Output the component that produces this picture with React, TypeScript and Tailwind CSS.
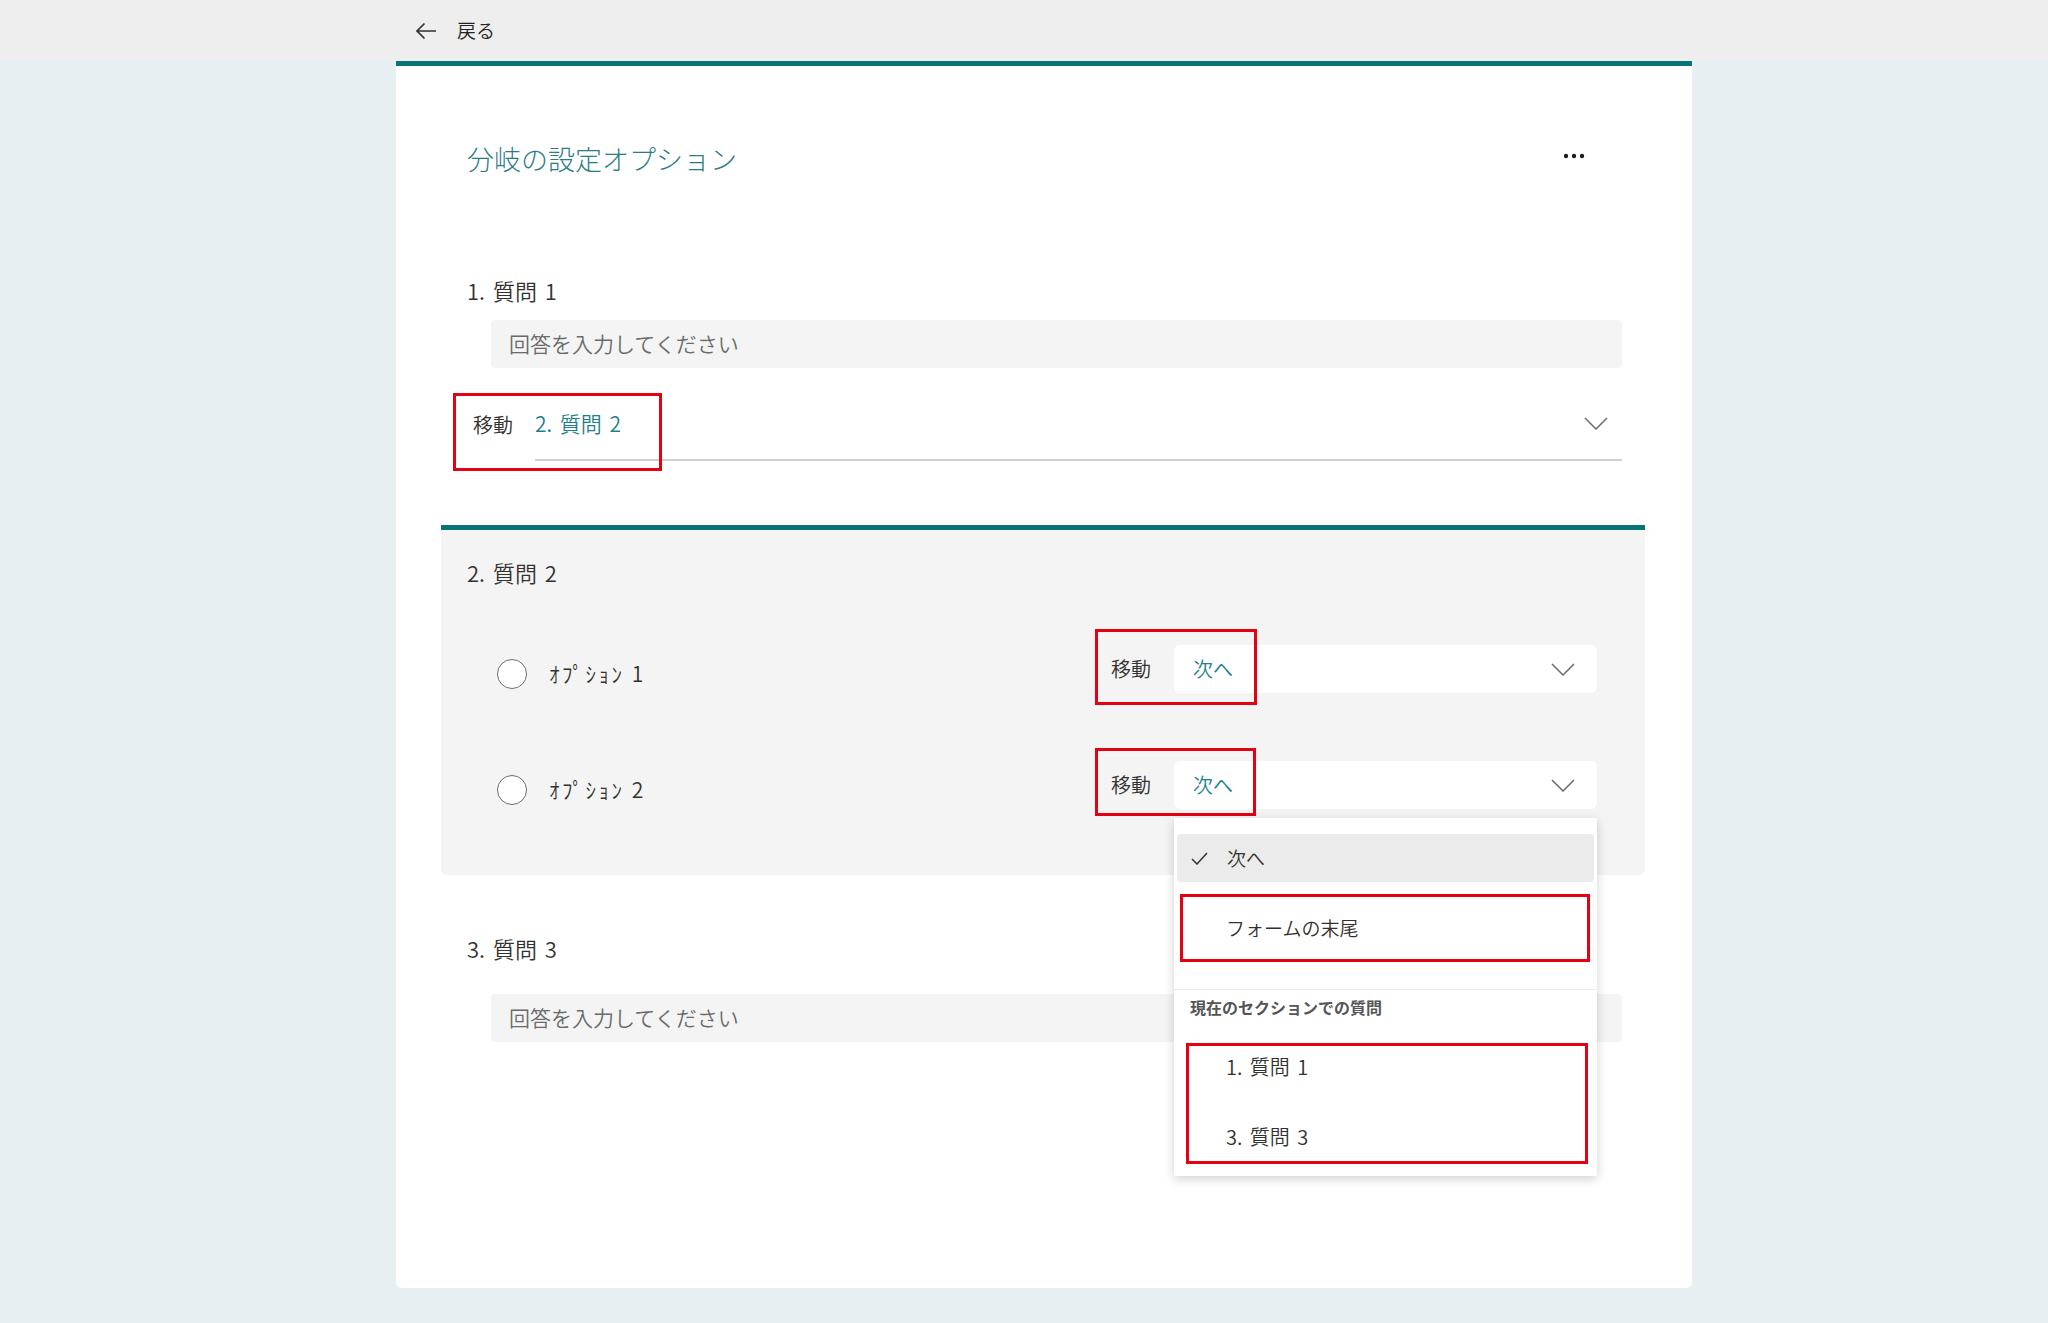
import React from "react";

const font = { fontFamily: '"Noto Sans CJK JP", "Noto Sans", sans-serif' };

function Chevron() {
  return (
    <svg width="24" height="13" viewBox="0 0 24 13" fill="none">
      <path d="M1 1 L12 12 L23 1" stroke="#6b6b6b" strokeWidth="1.5" />
    </svg>
  );
}

function RedBox({ className }: { className: string }) {
  return <div className={`absolute border-[3px] border-[#e50012] pointer-events-none ${className}`} />;
}

function AnswerInput() {
  return (
    <div className="ml-[95px] mr-[70px] h-[48px] rounded bg-[#f4f4f4] flex items-center pl-[18px] text-[21px] font-[350] text-[#6a6a6a]">
      回答を入力してください
    </div>
  );
}

function QuestionLabel({ text, className = "" }: { text: string; className?: string }) {
  return (
    <div className={`h-[30px] flex items-center text-[22px] font-[350] [word-spacing:3px] text-[#323130] ${className}`}>
      {text}
    </div>
  );
}

function Radio() {
  return <div className="w-[30px] h-[30px] rounded-full border-[1.5px] border-[#6b6b6b] bg-white flex-shrink-0" />;
}

function OptionRow({
  label,
  redClass,
  menu,
  className = "",
}: {
  label: string;
  redClass: string;
  menu?: React.ReactNode;
  className?: string;
}) {
  return (
    <div className={`flex items-center h-[48px] pl-[56px] pr-[48px] ${className}`}>
      <div className="flex items-center pt-[10px]">
        <Radio />
        <span className="ml-[22px] text-[21px] tracking-[2.5px] font-[350] text-[#323130]">{label}</span>
      </div>
      <div className="ml-auto relative flex items-center">
        <span className="text-[20px] font-[350] text-[#323130] w-[63px]">移動</span>
        <div className="relative w-[423px] h-[48px] bg-white rounded-md flex items-center justify-between pl-[19px] pr-[22px]">
          <span className="text-[20px] font-[350] text-[#1f7f8c]">次へ</span>
          <Chevron />
          {menu}
        </div>
        <RedBox className={redClass} />
      </div>
    </div>
  );
}

function Menu() {
  return (
    <div className="absolute left-0 top-[57px] w-[423px] bg-white shadow-[0_3px_10px_rgba(0,0,0,0.18)] pt-[16px] pb-[15px] z-10 font-[350]">
      <div className="mx-[3px] h-[48px] rounded bg-[#ebebeb] flex items-center pl-[14px]">
        <svg width="17" height="13" viewBox="0 0 17 13" fill="none">
          <path d="M1 7 L6 12 L16 1" stroke="#323130" strokeWidth="1.5" />
        </svg>
        <span className="ml-[19px] text-[19px] text-[#323130]">次へ</span>
      </div>
      <div className="mt-[22px] h-[48px] flex items-center pl-[52px] text-[19px] text-[#323130]">フォームの末尾</div>
      <div className="mt-[37px] h-px bg-[#ececec]" />
      <div className="h-[34px] flex items-center pl-[16px] text-[16px] font-semibold text-[#555555]">
        現在のセクションでの質問
      </div>
      <div className="mt-[19px] h-[48px] flex items-center pl-[52px] text-[20px] [word-spacing:3px] text-[#323130]">
        1. 質問 1
      </div>
      <div className="mt-[22px] h-[48px] flex items-center pl-[52px] text-[20px] [word-spacing:3px] text-[#323130]">
        3. 質問 3
      </div>
      <RedBox className="left-[6px] top-[76px] w-[410px] h-[68px]" />
      <RedBox className="left-[12px] top-[225px] w-[402px] h-[121px]" />
    </div>
  );
}

export default function App() {
  return (
    <div className="min-h-screen bg-[#e7eff2]" style={font}>
      <header className="h-[61px] bg-[#eeeeee] flex items-center pl-[415px]">
        <svg width="22" height="18" viewBox="0 0 22 18" fill="none">
          <path d="M21 9 H2 M9.5 1.5 L2 9 L9.5 16.5" stroke="#323130" strokeWidth="1.7" />
        </svg>
        <span className="ml-[20px] text-[19px] font-[350] text-[#252423]">戻る</span>
      </header>

      <main className="ml-[396px] w-[1296px] h-[1227px] bg-white border-t-[5px] border-[#077575] rounded-b-md">
        <div className="mt-[73px] h-[40px] flex items-center justify-between pl-[71px] pr-[107px]">
          <h1 className="text-[27px] font-light text-[#2b7c85]">分岐の設定オプション</h1>
          <svg width="22" height="6" viewBox="0 0 22 6" className="-mt-[6px]">
            <circle cx="3" cy="3" r="2.2" fill="#1f1f1f" />
            <circle cx="11" cy="3" r="2.2" fill="#1f1f1f" />
            <circle cx="19" cy="3" r="2.2" fill="#1f1f1f" />
          </svg>
        </div>

        <QuestionLabel text="1. 質問 1" className="mt-[96px] pl-[71px]" />
        <div className="mt-[15px]">
          <AnswerInput />
        </div>

        <div className="relative mt-[36px] flex pl-[77px] pr-[70px]">
          <div className="h-[57px] pb-[16px] flex items-center w-[62px] text-[20px] font-[350] text-[#323130]">移動</div>
          <div className="flex-1 h-[57px] pb-[16px] border-b-2 border-[#d0d0d0] flex items-center justify-between pr-[14px]">
            <span className="text-[21px] font-[350] [word-spacing:3px] text-[#1f7f8c]">2. 質問 2</span>
            <Chevron />
          </div>
          <RedBox className="left-[57px] top-[-11px] w-[209px] h-[78px]" />
        </div>

        <section className="mt-[64px] ml-[45px] mr-[47px] h-[350px] bg-[#f4f4f4] border-t-[5px] border-[#077575] rounded-b-md pt-[27px]">
          <QuestionLabel text="2. 質問 2" className="pl-[26px]" />
          <OptionRow
            label="ｵﾌﾟｼｮﾝ 1"
            className="mt-[58px]"
            redClass="left-[-16px] top-[-16px] w-[162px] h-[76px]"
          />
          <OptionRow
            label="ｵﾌﾟｼｮﾝ 2"
            className="mt-[68px]"
            redClass="left-[-16px] top-[-13px] w-[161px] h-[68px]"
            menu={<Menu />}
          />
        </section>

        <QuestionLabel text="3. 質問 3" className="mt-[58px] pl-[71px]" />
        <div className="mt-[31px]">
          <AnswerInput />
        </div>
      </main>
    </div>
  );
}
